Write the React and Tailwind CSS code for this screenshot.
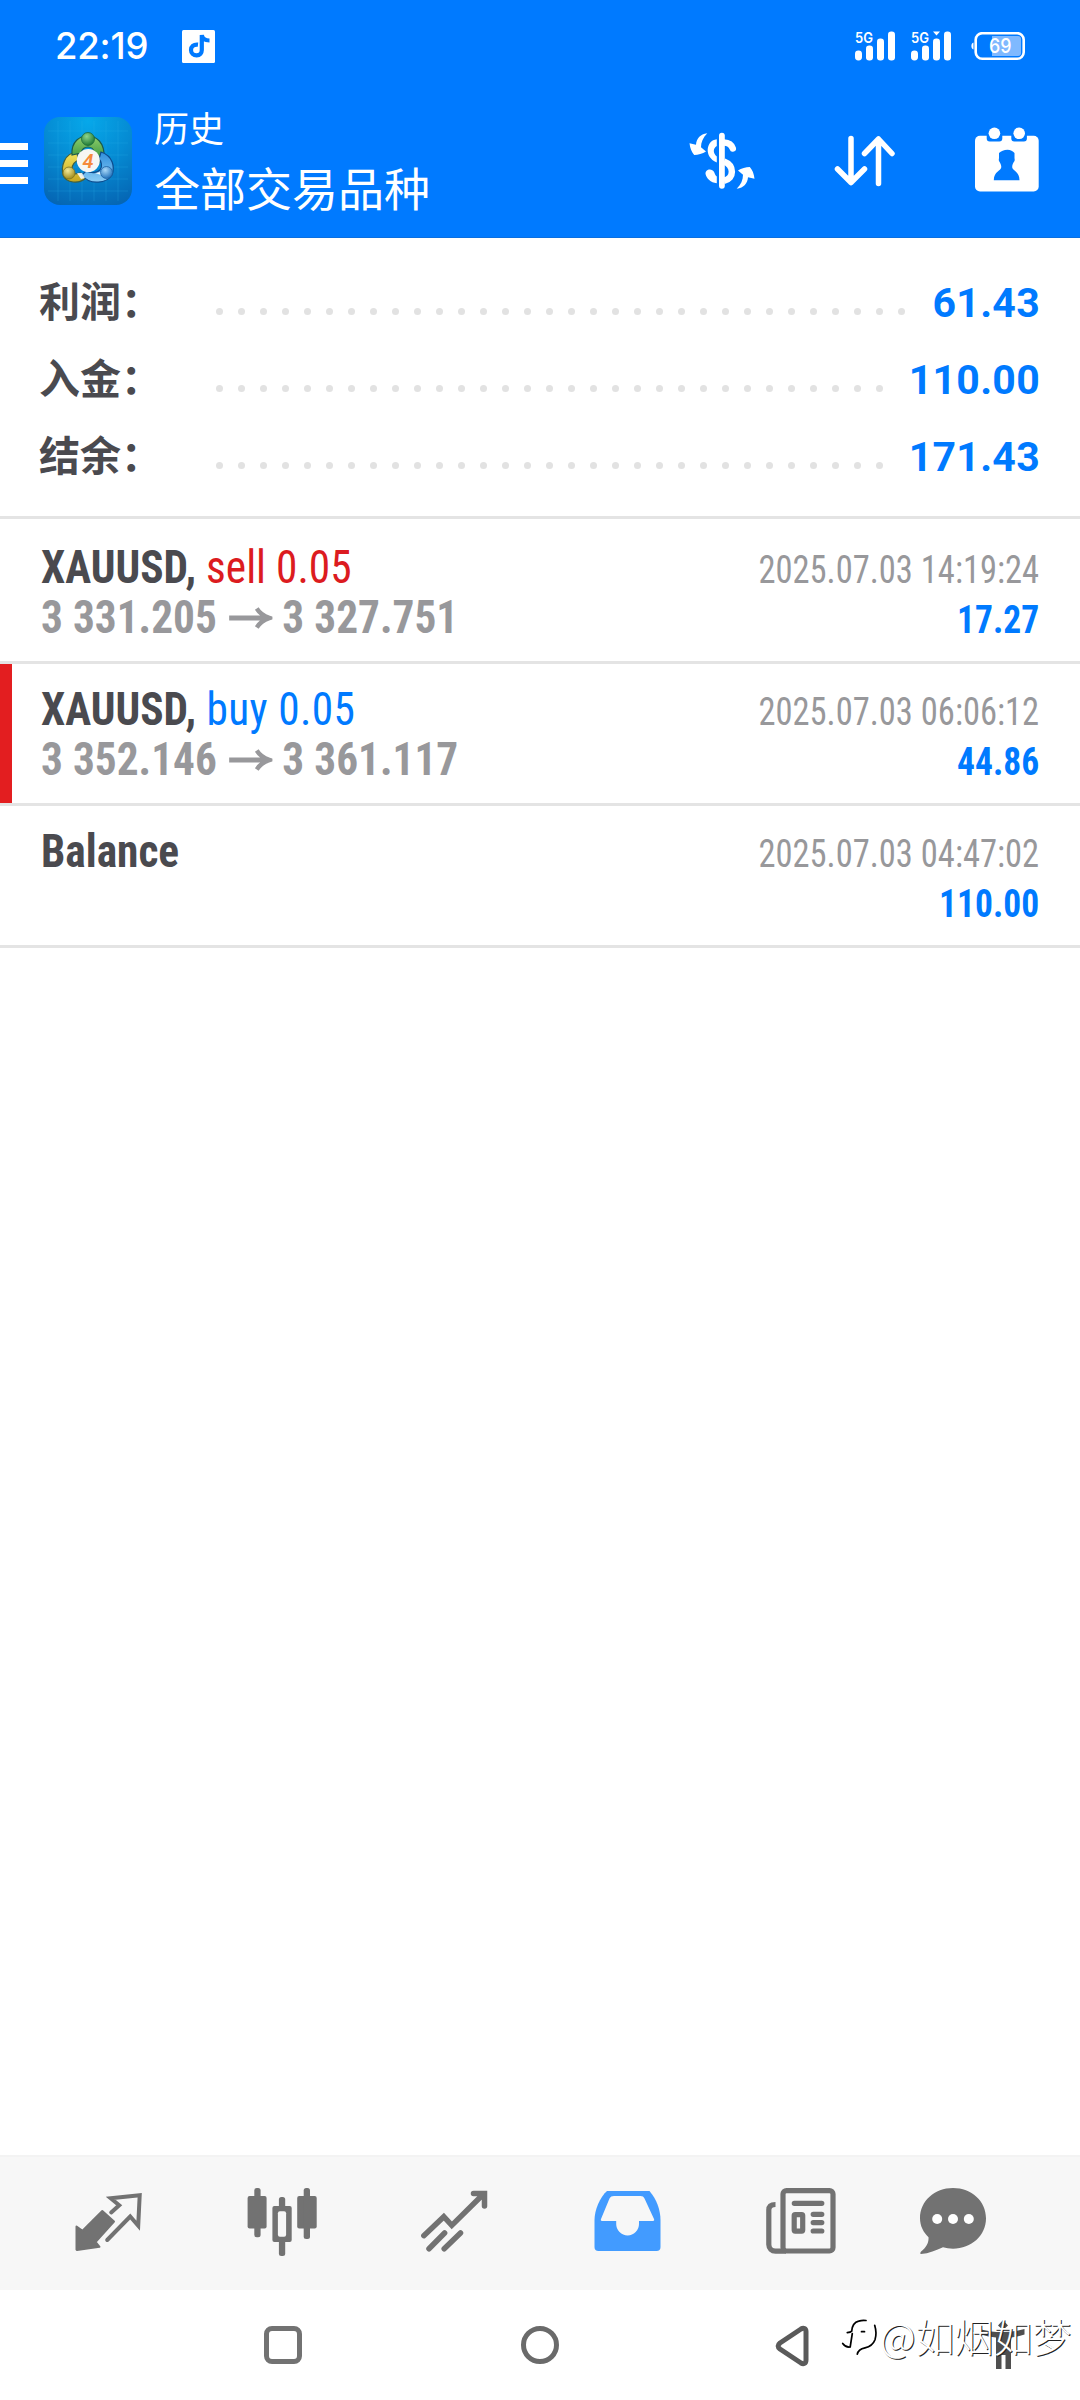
import React from 'react';

const summary = [
  { label: '利润：', value: '61.43', dots: 32 },
  { label: '入金：', value: '110.00', dots: 31 },
  { label: '结余：', value: '171.43', dots: 31 },
];

const history = [
  {
    id: 1,
    symbol: 'XAUUSD,',
    side: 'sell',
    volume: '0.05',
    open: '3 331.205',
    close: '3 327.751',
    time: '2025.07.03 14:19:24',
    profit: '17.27',
  },
  {
    id: 2,
    symbol: 'XAUUSD,',
    side: 'buy',
    volume: '0.05',
    open: '3 352.146',
    close: '3 361.117',
    time: '2025.07.03 06:06:12',
    profit: '44.86',
    marked: true,
  },
  { id: 3, symbol: 'Balance', time: '2025.07.03 04:47:02', profit: '110.00' },
];

const Signal = ({ active }) => (
  <svg width="42" height="32" viewBox="0 0 42 32" fill="#fff">
    <text x="0" y="12.500" fontSize="14.500" fontWeight="600" fontFamily="Inter, sans-serif" textLength="18" lengthAdjust="spacingAndGlyphs">5G</text>
    <rect x="0" y="20.500" width="7" height="10" rx="3.400" />
    <rect x="11" y="15.500" width="7" height="15" rx="3.200" />
    <rect x="22" y="8.500" width="7" height="22" rx="3.200" />
    <rect x="33" y="1.500" width="7" height="29" rx="3.200" />
    {active && <path d="M22 1.500h7l-3.500 4z" />}
  </svg>
);

const StatusBar = () => (
  <div className="flex h-[92px] items-center pl-[55px] pr-[54px] text-white">
    <span className="w-[127px] font-[Inter] text-[36.5px] font-medium leading-none tracking-[-0.2px]">22:19</span>
    <svg width="33" height="33" viewBox="0 0 33 33">
      <rect width="33" height="33" rx="1.500" fill="#fff" />
      <path d="M16 14.600c-4.600-.5-7 2.300-7 5.300 0 3.400 2.600 5.400 5.600 5.400 3.400 0 5.200-2.300 5.200-5.300V5c.6 3.500 3 5.500 7.700 5.500" fill="none" stroke="#007aff" strokeWidth="4.200" />
    </svg>
    <div className="ml-auto flex items-center">
      <Signal />
      <div className="ml-[14px]"><Signal active /></div>
      <svg className="ml-[17px]" width="56" height="28" viewBox="0 0 56 28">
        <path d="M3.500 10.500v7c-2.800-.5-2.800-6.500 0-7z" fill="#fff" />
        <rect x="5.700" y="1.200" width="48" height="25.500" rx="6.500" fill="none" stroke="#fff" strokeWidth="2.600" />
        <path d="M22 4h26a3 3 0 0 1 3 3v14a3 3 0 0 1-3 3H22z" fill="#7fb9ff" />
        <text x="19" y="20.800" fontSize="20" fontWeight="500" fontFamily="Inter, sans-serif" fill="#fff" textLength="22.500" lengthAdjust="spacingAndGlyphs">69</text>
      </svg>
    </div>
  </div>
);

const AppLogo = () => (
  <svg width="88" height="88" viewBox="0 0 88 88">
    <defs>
      <radialGradient id="bg" cx="0.5" cy="0.05" r="1">
        <stop offset="0" stopColor="#06a8ea" />
        <stop offset="0.5" stopColor="#058bd3" />
        <stop offset="1" stopColor="#0566b4" />
      </radialGradient>
      <linearGradient id="green" x1="0" y1="0" x2="0" y2="1">
        <stop offset="0" stopColor="#8fd06a" />
        <stop offset="1" stopColor="#2c8a3a" />
      </linearGradient>
      <linearGradient id="yellow" x1="0" y1="0" x2="0" y2="1">
        <stop offset="0" stopColor="#f3e45e" />
        <stop offset="1" stopColor="#c4a51f" />
      </linearGradient>
      <linearGradient id="blue" x1="0" y1="0" x2="0" y2="1">
        <stop offset="0" stopColor="#2f8fdc" />
        <stop offset="1" stopColor="#8accf5" />
      </linearGradient>
      <radialGradient id="gball" cx="0.4" cy="0.3" r="0.7">
        <stop offset="0" stopColor="#8fd58c" />
        <stop offset="1" stopColor="#1f7a35" />
      </radialGradient>
      <radialGradient id="yball" cx="0.4" cy="0.3" r="0.7">
        <stop offset="0" stopColor="#f4ea98" />
        <stop offset="1" stopColor="#a08c1c" />
      </radialGradient>
      <radialGradient id="bball" cx="0.4" cy="0.3" r="0.7">
        <stop offset="0" stopColor="#a9d8f8" />
        <stop offset="1" stopColor="#2474bd" />
      </radialGradient>
    </defs>
    <rect width="88" height="88" rx="16" fill="url(#bg)" />
    <path d="M14 4v80M26 4v80M38 4v80M50 4v80M62 4v80M74 4v80M4 14h80M4 26h80M4 38h80M4 50h80M4 62h80M4 74h80" stroke="#2fb4ee" strokeOpacity="0.22" />
    <path d="M33 35c-13 1-16 15-14 23 3 8 16 10 24 2l-7-4c-6 2-8 0-8-4 0-5 3-7 6-9z" fill="url(#yellow)" stroke="#46613c" strokeWidth="1.200" />
    <path d="M28 38c-1-14 8-19 16-19s17 6 16 22l-5 5-5-10c0-4-3-6-6-6s-6 2-7 6z" fill="url(#green)" stroke="#1c5b4a" strokeWidth="1.200" />
    <path d="M57 35c12 4 14 15 11 23-5 8-22 11-30 0l4-4c5 2 10 3 14-1 3-4 1-9-1-11z" fill="url(#blue)" stroke="#0d4b8d" strokeWidth="1.200" />
    <path d="M33 56h5l3 5-4 1zM51 56l6-1 0 3z" fill="#fff" fillOpacity="0.85" />
    <circle cx="44" cy="22" r="6.500" fill="url(#gball)" stroke="#1c6a3c" strokeWidth="0.800" />
    <circle cx="25" cy="56" r="6" fill="url(#yball)" stroke="#7c7322" strokeWidth="0.800" />
    <circle cx="62.500" cy="55.500" r="6" fill="url(#bball)" stroke="#1d62a4" strokeWidth="0.800" />
    <circle cx="44.300" cy="43.500" r="11.500" fill="#f6f6f4" />
    <text x="44" y="50.500" fontSize="20" fontStyle="italic" fontWeight="600" fontFamily="Roboto, sans-serif" fill="#f58a3c" textAnchor="middle">4</text>
  </svg>
);

const CurrencyIcon = () => (
  <svg width="68" height="58" viewBox="0 0 68 58" fill="#fff">
    <rect x="30" y="0.700" width="5.800" height="56" rx="2.900" />
    <path d="M27.800 7.300C17 8.500 14.500 25 27.800 30.500v-6c-4-3.500-4-8 0-10.500z" />
    <path d="M35 10.500c4.500.2 7.500 2 8.800 6" fill="none" stroke="#fff" strokeWidth="6.500" strokeLinecap="round" />
    <path d="M35 29.500c10.500 4 10.500 17 0 19.200" fill="none" stroke="#fff" strokeWidth="6.500" />
    <path d="M27.800 44.500c-1.300-.6-1.900-2.500-2.600-4.200-2.200-4.500-9.500-3-8.600 2 .9 4.200 5 8.400 11.200 8.900z" />
    <path id="swap" d="M18.300 1.300C11 2 7.500 7 7 12.800L.5 11.300c.6 5 2 8.700 4.700 11.700 4-.3 8.300-1.200 11.800-3.500l-5-4.200c0-5 2-10 6.300-14z" />
    <use href="#swap" transform="rotate(180 33 29)" />
  </svg>
);

const SortIcon = () => (
  <svg width="62" height="52" viewBox="0 0 62 52" fill="none" stroke="#fff" strokeWidth="5.500" strokeLinecap="round" strokeLinejoin="round">
    <path d="M17 3.500v44M3.500 34L17 47.500 30.500 34M44.500 48.500v-44M30.500 18.500L44.500 4l13.500 14.500" />
  </svg>
);

const CalendarIcon = () => (
  <svg width="64" height="65" viewBox="0 0 64 65">
    <rect y="8.700" width="63.700" height="55.800" rx="5" fill="#fff" />
    <path d="M11.700 8h15.600v3.500a3 3 0 0 1-3 3h-9.600a3 3 0 0 1-3-3zM36.300 8h15.600v3.500a3 3 0 0 1-3 3h-9.600a3 3 0 0 1-3-3z" fill="#007aff" />
    <circle cx="19.400" cy="6.300" r="5.800" fill="#fff" />
    <circle cx="44.200" cy="6.300" r="5.800" fill="#fff" />
    <path d="M24 26c2-2 5-3.300 8.500-3.300 3 .3 5.500 1.300 7 3.300v5c0 1 .5 1.500 0 3-1.500 2-2.300 4-2.300 6 0 4 7.300 4 7.300 13.200H18.800c0-9 7.500-9.200 7.500-13.200 0-2-1-4-2.300-6-.5-1.500 0-2 0-3z" fill="#007aff" />
  </svg>
);

const TopBar = () => (
  <div className="flex h-[146px] items-start border-b border-[#0a6fe0] pt-[25px] text-white">
    <div className="flex w-[44px] flex-col gap-[10px] pt-[26px]">
      <div className="h-[7px] w-[28px] bg-white" />
      <div className="h-[7px] w-[28px] bg-white" />
      <div className="h-[7px] w-[28px] bg-white" />
    </div>
    <AppLogo />
    <div className="ml-[22px] flex w-[535px] flex-col font-['Noto_Sans_CJK_SC']">
      <div className="-mt-[10px] text-[35px] leading-[40px]">历史</div>
      <div className="mt-[14px] text-[46px] leading-[50px]">全部交易品种</div>
    </div>
    <div className="flex w-[391px] pr-[41px]">
      <div className="w-[145px] pt-[15px]"><CurrencyIcon /></div>
      <div className="w-[141px] pt-[18px]"><SortIcon /></div>
      <div className="pt-[10px]"><CalendarIcon /></div>
    </div>
  </div>
);

const SummaryRow = ({ label, value, dots }) => (
  <div className="flex h-[77px] items-center">
    <div className="-mt-[5px] w-[177px] shrink-0 font-['Noto_Sans_CJK_SC'] text-[41px] font-bold leading-none text-[#4a4a4f]">
      {label}
    </div>
    <div className="mt-[19px] flex gap-[15px]">
      {Array.from({ length: dots }, (_, i) => (
        <span key={i} className="size-[7px] rounded-full bg-[#e2e2e2]" />
      ))}
    </div>
    <div className="ml-auto mt-[4px] font-[Roboto] text-[41px] font-bold leading-none tracking-[0.3px] text-[#007aff]">{value}</div>
  </div>
);

const Price = ({ open, close }) => (
  <div className="flex items-center text-[47px] font-bold text-[#98989b]">
    <span>{open}</span>
    <svg className="ml-[13px] mr-[11px] mt-[1px]" width="47" height="24" viewBox="0 0 47 24" fill="none" stroke="#98989b" strokeWidth="4.800">
      <path d="M0 12h43M30 2.500c3 4.500 7.500 7.500 13.500 9.500-6 2-10.500 5-13.500 9.500" />
    </svg>
    <span>{close}</span>
  </div>
);

const HistoryRow = ({ item, first }) => (
  <div className={`flex border-b-[3px] border-[#e4e4e4] ${first ? 'h-[145px] pt-[3px]' : 'h-[142px]'}`}>
    <div className={`w-[12px] shrink-0 ${item.marked ? 'bg-[#e31e20]' : ''}`} />
    <div className="flex flex-1 justify-between pl-[29px] pr-[41px] pt-[20px] font-[Roboto] leading-[50px] [font-stretch:75%]">
      <div className="origin-left scale-x-[0.922] whitespace-nowrap">
        <div className="text-[47px] font-bold text-[#4a4a4f]">
          {item.symbol}
          {item.side && (
            <span className={`font-normal ${item.side === 'sell' ? 'text-[#dc1b20]' : 'tracking-[0.4px] text-[#007aff]'}`}>
              {' '}{item.side} {item.volume}
            </span>
          )}
        </div>
        {item.open && <Price open={item.open} close={item.close} />}
      </div>
      <div className="whitespace-nowrap pt-[3px] text-right text-[38px]">
        <div className="origin-right scale-x-[0.908] text-[#98989b]">{item.time}</div>
        <div className="origin-right scale-x-[0.935] font-bold text-[#007aff]">{item.profit}</div>
      </div>
    </div>
  </div>
);

const QuotesIcon = () => (
  <svg width="68" height="60" viewBox="0 0 68 60">
    <path d="M1.500 34.500l6 4.300 19.800-19.800L39 29.500 20.500 50l4 4.800-22.500 3.200-.5-.5z" fill="#727272" stroke="#727272" strokeWidth="2" strokeLinejoin="round" />
    <path d="M36.200 20.500l8-7.200-8.500-7 29-3.100-1.500 30.500-8-9.200-23 23.500" fill="none" stroke="#727272" strokeWidth="4" strokeLinecap="round" />
  </svg>
);

const ChartIcon = () => (
  <svg width="70" height="68" viewBox="0 0 70 68" fill="#727272">
    <rect x="0.600" y="8" width="19" height="32.500" rx="2" />
    <rect x="7.300" y="0" width="6.300" height="49.300" rx="2.500" />
    <rect x="50.200" y="8" width="19.500" height="32.500" rx="2" />
    <rect x="56.700" y="0" width="6.300" height="51" rx="2.500" />
    <rect x="31.900" y="9" width="6.300" height="59" rx="2.500" />
    <rect x="25.400" y="18" width="19.300" height="36" rx="2" />
    <rect x="30.900" y="23.300" width="8.200" height="25.400" rx="2" fill="#f7f7f7" />
  </svg>
);

const TradeIcon = () => (
  <svg width="67" height="63" viewBox="0 0 67 63" fill="none" stroke="#727272" strokeWidth="5.500" strokeLinecap="round">
    <path d="M2.800 45.700l20-19 8 8.700L62.500 4M52.500 3.500h11v12.500M8 58.800l15.600-15.800M23.200 58.800L39.500 43" />
  </svg>
);

const HistoryIcon = () => (
  <svg width="67" height="62" viewBox="0 0 67 62">
    <path d="M13 1h42.500c7 8 11 19 11 29v27a4 4 0 0 1-4 4H4.500a4 4 0 0 1-4-4V30C.5 20 6 7 13 1z" fill="#429bff" />
    <path d="M20 6h26.500c2 0 3.300.8 4 2.500L60 29c.5 1.200 0 2-1 2H45v3a11.400 11.400 0 0 1-22.800 0v-3H8c-1 0-1.500-.8-1-2L15.500 8.500C16.300 6.800 18 6 20 6z" fill="#f7f7f7" />
  </svg>
);

const NewsIcon = () => (
  <svg width="71" height="67" viewBox="0 0 71 67" fill="none" stroke="#727272" strokeWidth="5.200">
    <rect x="17" y="2.600" width="50" height="60.400" rx="3.500" />
    <path d="M9.500 16.500c-4 0-6.700 1.500-6.700 5.500v34.500c0 4 3 6.700 6.700 6.700H20" />
    <path d="M28.300 15.300h27.500M47.200 26.300h8.600M47.200 34.600h8.600M47.200 43h8.600" strokeLinecap="round" />
    <rect x="28.200" y="26.600" width="8.500" height="16.500" rx="1" />
  </svg>
);

const ChatIcon = () => (
  <svg width="67" height="67" viewBox="0 0 67 67" fill="#727272">
    <path d="M33 0c18.500 0 33 13 33 30.300S51.500 60.700 33 60.700c-3.500 0-7-.5-10-1.400C16 62.500 9 65.500 1 66c-1.500-.3-.5-2 1-3.200 4-3.500 7-8 6.500-13.500C3.500 44.500 0 38 0 30.300 0 13 14.500 0 33 0z" />
    <circle cx="17.200" cy="31" r="5" fill="#fff" />
    <circle cx="33" cy="31" r="5" fill="#fff" />
    <circle cx="48.800" cy="31" r="5" fill="#fff" />
  </svg>
);

const TabBar = () => (
  <div className="flex h-[135px] border-t-2 border-[#f3f3f3] bg-[#f7f7f7] pl-[23px]">
    <div className="flex w-[172px] justify-center pt-[35px]"><QuotesIcon /></div>
    <div className="flex w-[173px] justify-center pt-[31px]"><ChartIcon /></div>
    <div className="flex w-[173px] justify-center pt-[33px]"><TradeIcon /></div>
    <div className="flex w-[173px] justify-center pt-[33px]"><HistoryIcon /></div>
    <div className="flex w-[174px] justify-center pt-[31px]"><NewsIcon /></div>
    <div className="flex w-[131px] justify-center pt-[31px]"><ChatIcon /></div>
  </div>
);

const Watermark = () => (
  <div className="absolute left-[840px] top-[25px] flex items-start">
    <svg className="mt-[2px]" width="40" height="44" viewBox="0 0 40 44" fill="none" stroke="#000" strokeWidth="1.700" strokeLinecap="round">
      <path d="M7.300 15.700c2.500-.3 3.700-.8 4.400-1.600.4-5 3-9 7-10 2.500-.8 5-1 7.300-.6M34.700 8.300c1.500 5 1.700 10 .3 14.500-1.500 4-5 7-10 8-4 .8-7 2.500-7.700 6.400M12.300 16.500L10.200 30C7 30.500 4.500 29 2.700 26.500M21.500 14.700h3" />
    </svg>
    <span className="whitespace-nowrap font-['Noto_Sans_CJK_SC'] text-[39px] font-light leading-[40px] text-white [text-shadow:1px_1px_0_#222]">@如烟如梦</span>
  </div>
);

const NavBar = () => (
  <div className="relative flex h-[110px] pl-[264px] pt-[35px]">
    <div className="mt-[1px] h-[38px] w-[38px] rounded-[8px] border-[5.500px] border-[#727272]" />
    <div className="ml-[219px] mt-[1px] h-[38px] w-[38px] rounded-full border-[5px] border-[#6a6a6a]" />
    <svg className="ml-[216px]" width="36" height="42" viewBox="0 0 36 42">
      <path d="M5 18L26 4c2.500-1.500 5-.8 5 2.500v28.500c0 3.500-2.500 4.500-5 3L5 24c-2.500-2-2.500-4 0-6z" fill="none" stroke="#5a5a5a" strokeWidth="5" />
    </svg>
    <svg className="-mt-[6px] ml-[168px]" width="48" height="52" viewBox="0 0 48 52" fill="#4f4f4f">
      <path d="M24 1l5 5.500-5 4.500-5-4.500zM2 10.500c14 3.500 29 3.500 43.500-.5v5.500c-4.500 1.500-9 2.500-13.500 3v31.500h-5.500V36h-4v14H17V18.500c-5-.5-10-1.500-15-3z" />
    </svg>
    <Watermark />
  </div>
);

const App = () => {
  return (
    <div className="flex h-[2400px] w-[1080px] flex-col overflow-hidden bg-white">
      <header className="bg-[#007aff]">
        <StatusBar />
        <TopBar />
      </header>
      <section className="h-[281px] border-b-[3px] border-[#e4e4e4] pl-[39px] pr-[40px] pt-[25px]">
        {summary.map((row) => (
          <SummaryRow key={row.label} {...row} />
        ))}
      </section>
      <main className="flex-1">
        {history.map((item, i) => (
          <HistoryRow key={item.id} item={item} first={i === 0} />
        ))}
      </main>
      <TabBar />
      <NavBar />
    </div>
  );
};

export default App;
